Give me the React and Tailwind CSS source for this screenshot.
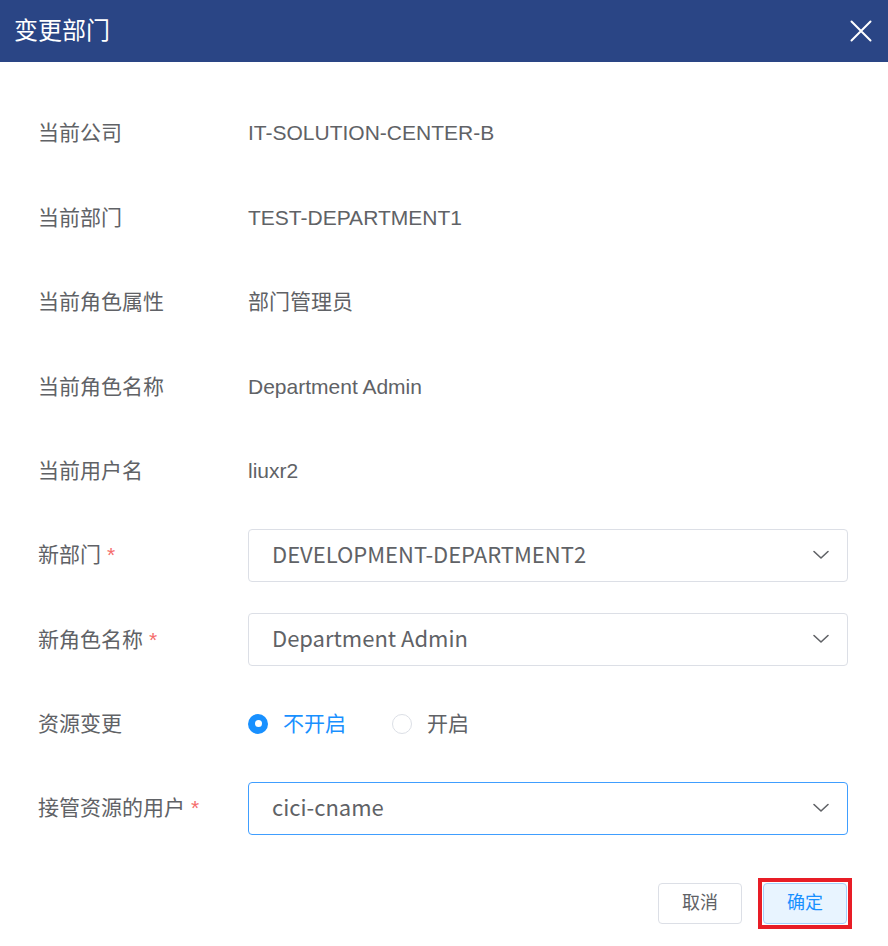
import React from "react";

const font = { fontFamily: '"Liberation Sans", "Noto Sans CJK SC", sans-serif' };
const selectFont = { fontFamily: '"Noto Sans CJK SC", "Liberation Sans", sans-serif' };

function Chevron() {
  return (
    <svg width="18" height="10" viewBox="0 0 18 10" fill="none" className="shrink-0">
      <path d="M2 1.5 L9 8 L16 1.5" stroke="#606266" strokeWidth="1.6" strokeLinecap="round" strokeLinejoin="round" />
    </svg>
  );
}

function Select({ value, focused }) {
  return (
    <div
      className={
        "flex h-[53px] w-[600px] items-center justify-between rounded-[4px] border bg-white pl-[23px] pr-[17px] " +
        (focused ? "border-[#409eff]" : "border-[#dcdfe6]")
      }
    >
      <span className="pb-[4px] text-[22px] leading-none text-[#606266]" style={selectFont}>{value}</span>
      <Chevron />
    </div>
  );
}

function Label({ children, required }) {
  return (
    <div className="w-[210px] shrink-0 text-[21px] text-[#606266]">
      {children}
      {required && <span className="ml-[6px] text-[#f56c6c]">*</span>}
    </div>
  );
}

function Row({ label, required, children }) {
  return (
    <div className="flex h-[84.375px] items-center">
      <Label required={required}>{label}</Label>
      {children}
    </div>
  );
}

export default function App() {
  return (
    <div className="h-[946px] w-[888px] bg-white" style={font}>
      <div className="flex h-[62px] items-center justify-between bg-[#2a4585] pl-[14px] pr-[16px]">
        <span className="text-[24px] text-white">变更部门</span>
        <svg width="22" height="22" viewBox="0 0 22 22" fill="none">
          <path d="M1.5 1.5 L20.5 20.5 M20.5 1.5 L1.5 20.5" stroke="white" strokeWidth="2" strokeLinecap="round" />
        </svg>
      </div>
      <div className="pl-[38px] pr-[40px] pt-[29px]">
        <Row label="当前公司">
          <span className="text-[21px] text-[#606266]">IT-SOLUTION-CENTER-B</span>
        </Row>
        <Row label="当前部门">
          <span className="text-[21px] text-[#606266]">TEST-DEPARTMENT1</span>
        </Row>
        <Row label="当前角色属性">
          <span className="text-[21px] text-[#606266]">部门管理员</span>
        </Row>
        <Row label="当前角色名称">
          <span className="text-[21px] text-[#606266]">Department Admin</span>
        </Row>
        <Row label="当前用户名">
          <span className="text-[21px] text-[#606266]">liuxr2</span>
        </Row>
        <Row label="新部门" required>
          <Select value="DEVELOPMENT-DEPARTMENT2" />
        </Row>
        <Row label="新角色名称" required>
          <Select value="Department Admin" />
        </Row>
        <Row label="资源变更">
          <div className="flex items-center">
            <span className="flex h-[20px] w-[20px] items-center justify-center rounded-full bg-[#1890ff]">
              <span className="h-[7px] w-[7px] rounded-full bg-white" />
            </span>
            <span className="ml-[15px] text-[21px] text-[#1890ff]">不开启</span>
            <span className="ml-[46px] h-[20px] w-[20px] rounded-full border border-[#dcdfe6] bg-white" />
            <span className="ml-[15px] text-[21px] text-[#606266]">开启</span>
          </div>
        </Row>
        <Row label="接管资源的用户" required>
          <Select value="cici-cname" focused />
        </Row>
        <div className="mt-[28px] flex items-center justify-end">
          <button className="h-[41px] w-[84px] rounded-[4px] border border-[#dcdfe6] bg-white text-[18px] text-[#606266]">
            取消
          </button>
          <div className="ml-[16px] border-[4px] border-[#e81d26] p-[1px] -mr-[4px]">
            <button className="block h-[41px] w-[84px] rounded-[4px] border border-[#a3d0fd] bg-[#e8f4ff] text-[18px] text-[#1890ff]">
              确定
            </button>
          </div>
        </div>
      </div>
    </div>
  );
}
